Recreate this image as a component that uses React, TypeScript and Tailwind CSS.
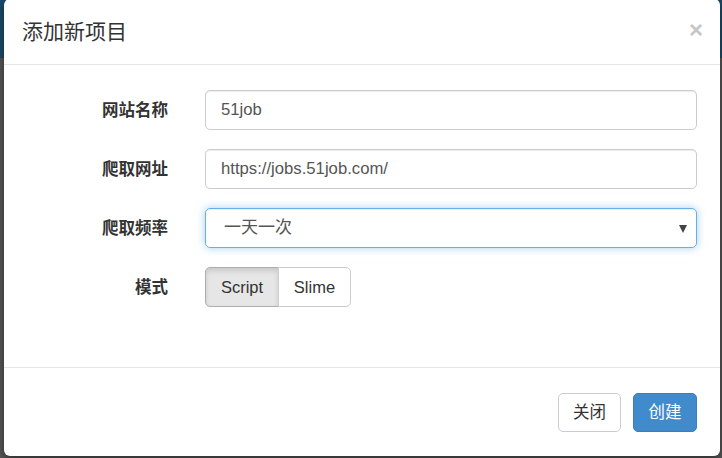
import { useState } from "react";

const font = "font-['Liberation_Sans','Noto_Sans_CJK_SC',sans-serif]";

function Field({ label, children }: { label: string; children: React.ReactNode }) {
  return (
    <div className="flex items-center">
      <label className="w-[164px] shrink-0 text-right text-[16.5px] font-bold text-[#333]">{label}</label>
      <div className="ml-[37px] flex-1">{children}</div>
    </div>
  );
}

export default function App() {
  const [mode, setMode] = useState<"script" | "slime">("script");

  return (
    <div className={`${font} relative h-[458px] w-[722px] overflow-hidden bg-[#575757]`}>
      {/* backdrop hint of the page behind */}
      <div className="h-[58px] w-full bg-[#1c4a6b]" />
      <div className="absolute left-[4px] top-[-1px] flex h-[457px] w-[716px] flex-col rounded-[6px] bg-white shadow-[0_3px_9px_rgba(0,0,0,0.5)]">
        <div className="flex h-[66px] shrink-0 items-center justify-between border-b border-[#e5e5e5] pl-[18px] pr-[17px]">
          <h4 className="text-[21px] font-normal text-[#333]">添加新项目</h4>
          <button className="mb-[4px] text-[24px] font-bold leading-none text-[#c6c6c6]">×</button>
        </div>

        <div className="flex flex-1 flex-col gap-[19px] pr-[23px] pt-[25px]">
          <Field label="网站名称">
            <input
              defaultValue="51job"
              className="h-[40px] w-full rounded-[5px] border border-[#ccc] px-[15px] text-[16.7px] text-[#555] shadow-[inset_0_1px_1px_rgba(0,0,0,0.075)] outline-none"
            />
          </Field>
          <Field label="爬取网址">
            <input
              defaultValue="https://jobs.51job.com/"
              className="h-[40px] w-full rounded-[5px] border border-[#ccc] px-[15px] text-[16.7px] text-[#555] shadow-[inset_0_1px_1px_rgba(0,0,0,0.075)] outline-none"
            />
          </Field>
          <Field label="爬取频率">
            <div className="relative flex h-[40px] w-full items-center rounded-[5px] border border-[#66afe9] pl-[18px] text-[17px] text-[#555] shadow-[inset_0_1px_1px_rgba(0,0,0,0.075),0_0_8px_rgba(102,175,233,0.6)]">
              一天一次
              <span className="absolute right-[9px] top-[16px] h-0 w-0 border-x-[4px] border-t-[8px] border-x-transparent border-t-[#444]" />
            </div>
          </Field>
          <Field label="模式">
            <div className="flex h-[40px]">
              <button
                onClick={() => setMode("script")}
                className={
                  mode === "script"
                    ? "w-[74px] rounded-l-[5px] border border-[#adadad] bg-[#e6e6e6] text-[16.5px] text-[#333] shadow-[inset_0_3px_5px_rgba(0,0,0,0.125)]"
                    : "w-[74px] rounded-l-[5px] border border-[#ccc] bg-white text-[16.5px] text-[#333]"
                }
              >
                Script
              </button>
              <button
                onClick={() => setMode("slime")}
                className={
                  mode === "slime"
                    ? "-ml-px w-[73px] rounded-r-[5px] border border-[#adadad] bg-[#e6e6e6] text-[16.5px] text-[#333] shadow-[inset_0_3px_5px_rgba(0,0,0,0.125)]"
                    : "-ml-px w-[73px] rounded-r-[5px] border border-[#ccc] bg-white text-[16.5px] text-[#333]"
                }
              >
                Slime
              </button>
            </div>
          </Field>
        </div>

        <div className="flex h-[89px] shrink-0 items-center justify-end gap-[12px] border-t border-[#e5e5e5] pb-[2px] pr-[23px] pt-[2px]">
          <button className="h-[39px] w-[63px] rounded-[5px] border border-[#ccc] bg-white text-[16.5px] text-[#333]">关闭</button>
          <button className="h-[39px] w-[64px] rounded-[5px] border border-[#3a7fbd] bg-[#428bca] text-[16.5px] text-white">创建</button>
        </div>
      </div>
    </div>
  );
}
